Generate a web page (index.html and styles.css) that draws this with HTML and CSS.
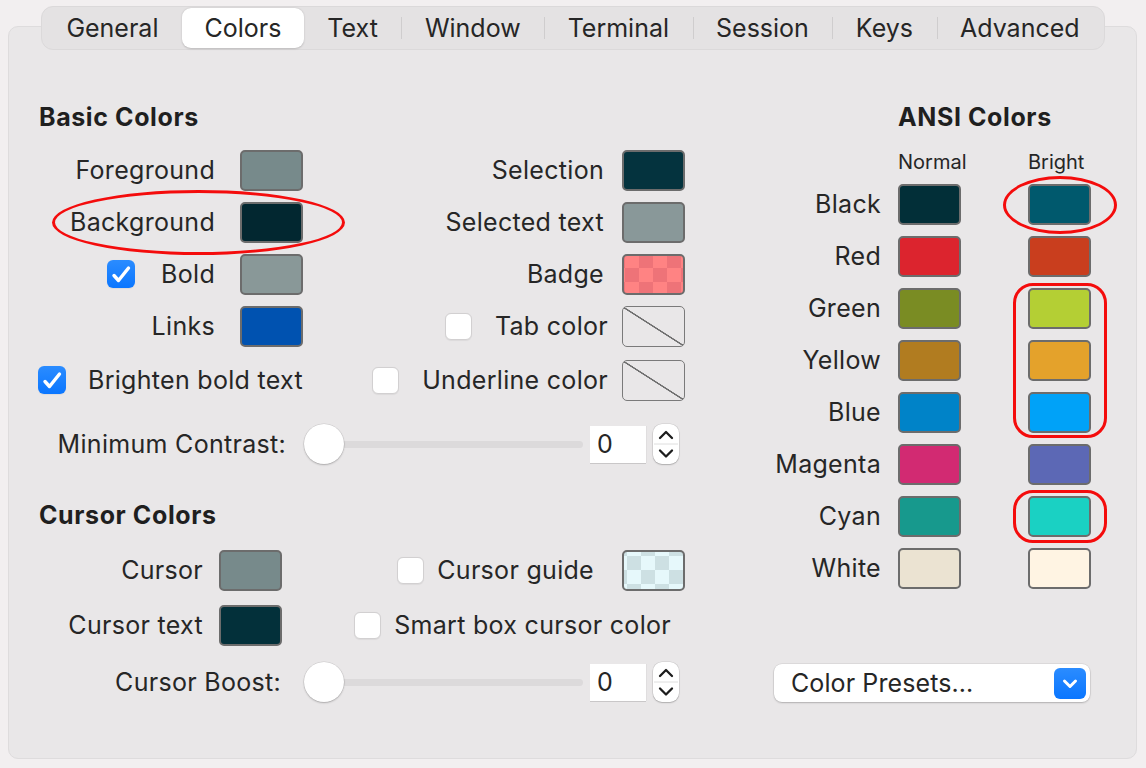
FILE: index.html
```html
<!DOCTYPE html>
<html>
<head>
<meta charset="utf-8">
<title>Profiles — Colors</title>
<link rel="stylesheet" href="styles.css">
</head>
<body>
<div class="window">
  <div class="tabbar-wrap">
    <div class="tabbar">
      <div class="tab">General</div>
      <div class="tab active">Colors</div>
      <div class="tab">Text</div>
      <div class="tab sep">Window</div>
      <div class="tab sep">Terminal</div>
      <div class="tab sep">Session</div>
      <div class="tab sep">Keys</div>
      <div class="tab sep">Advanced</div>
    </div>
  </div>

  <div class="panel">
    <div class="left">
      <h2 class="heading">Basic Colors</h2>
      <div class="basic-grid">
        <div class="cell c1"><span class="label">Foreground</span><span class="swatch sw-fg"></span></div>
        <div class="cell c2"><span class="label">Selection</span><span class="swatch sw-sel"></span></div>

        <div class="cell c1"><span class="label">Background</span><span class="swatch sw-bg"></span></div>
        <div class="cell c2"><span class="label">Selected text</span><span class="swatch sw-seltext"></span></div>

        <div class="cell c1"><span class="checkbox checked bold-cb"><svg viewBox="0 0 28 28" width="28" height="28"><path d="M7 15.5 L11.5 20.5 L21.5 8" fill="none" stroke="#fff" stroke-width="3.4" stroke-linecap="round" stroke-linejoin="round"/></svg></span><span class="label">Bold</span><span class="swatch sw-bold"></span></div>
        <div class="cell c2"><span class="label">Badge</span><span class="swatch sw-badge"></span></div>

        <div class="cell c1"><span class="label">Links</span><span class="swatch sw-links"></span></div>
        <div class="cell c2 cbrow"><span class="checkbox"></span><span class="label">Tab color</span><span class="swatch sw-none"></span></div>

        <div class="cell c1 brighten"><span class="checkbox checked"><svg viewBox="0 0 28 28" width="28" height="28"><path d="M7 15.5 L11.5 20.5 L21.5 8" fill="none" stroke="#fff" stroke-width="3.4" stroke-linecap="round" stroke-linejoin="round"/></svg></span><span class="label">Brighten bold text</span></div>
        <div class="cell c2 cbrow"><span class="checkbox"></span><span class="label">Underline color</span><span class="swatch sw-none"></span></div>
      </div>

      <div class="slider-row contrast">
        <span class="slabel">Minimum Contrast:</span>
        <div class="track"><span class="knob"></span></div>
        <span class="numfield">0</span>
        <span class="stepper"><svg viewBox="0 0 26 40" width="26" height="40"><path d="M7 14 L13 8 L19 14" fill="none" stroke="#1d1d1d" stroke-width="2.3" stroke-linecap="round" stroke-linejoin="round"/><line x1="1" y1="20" x2="25" y2="20" stroke="#dedede" stroke-width="1"/><path d="M7 26.5 L13 32.5 L19 26.5" fill="none" stroke="#1d1d1d" stroke-width="2.3" stroke-linecap="round" stroke-linejoin="round"/></svg></span>
      </div>

      <h2 class="heading cursor-heading">Cursor Colors</h2>
      <div class="cursor-grid">
        <div class="cell k1"><span class="label">Cursor</span><span class="swatch sw-cursor"></span></div>
        <div class="cell k2"><span class="checkbox"></span><span class="label">Cursor guide</span><span class="swatch sw-guide"></span></div>
        <div class="cell k1"><span class="label">Cursor text</span><span class="swatch sw-cursortext"></span></div>
        <div class="cell k2 smart"><span class="checkbox"></span><span class="label">Smart box cursor color</span></div>
      </div>

      <div class="slider-row boost">
        <span class="slabel">Cursor Boost:</span>
        <div class="track"><span class="knob"></span></div>
        <span class="numfield">0</span>
        <span class="stepper"><svg viewBox="0 0 26 40" width="26" height="40"><path d="M7 14 L13 8 L19 14" fill="none" stroke="#1d1d1d" stroke-width="2.3" stroke-linecap="round" stroke-linejoin="round"/><line x1="1" y1="20" x2="25" y2="20" stroke="#dedede" stroke-width="1"/><path d="M7 26.5 L13 32.5 L19 26.5" fill="none" stroke="#1d1d1d" stroke-width="2.3" stroke-linecap="round" stroke-linejoin="round"/></svg></span>
      </div>
    </div>

    <div class="right">
      <h2 class="heading ansi-heading">ANSI Colors</h2>
      <div class="ansi-grid">
        <span></span><span class="colhead">Normal</span><span class="colhead">Bright</span>
        <span class="alabel">Black</span><span class="swatch a-black"></span><span class="swatch b-black"></span>
        <span class="alabel">Red</span><span class="swatch a-red"></span><span class="swatch b-red"></span>
        <span class="alabel">Green</span><span class="swatch a-green"></span><span class="swatch b-green"></span>
        <span class="alabel">Yellow</span><span class="swatch a-yellow"></span><span class="swatch b-yellow"></span>
        <span class="alabel">Blue</span><span class="swatch a-blue"></span><span class="swatch b-blue"></span>
        <span class="alabel">Magenta</span><span class="swatch a-magenta"></span><span class="swatch b-magenta"></span>
        <span class="alabel">Cyan</span><span class="swatch a-cyan"></span><span class="swatch b-cyan"></span>
        <span class="alabel">White</span><span class="swatch a-white"></span><span class="swatch b-white"></span>
      </div>
      <div class="popup">
        <span class="popup-text">Color Presets...</span>
        <span class="popup-btn"><svg viewBox="0 0 32 31" width="32" height="31"><path d="M10.5 13 L16 18.5 L21.5 13" fill="none" stroke="#fff" stroke-width="3" stroke-linecap="round" stroke-linejoin="round"/></svg></span>
      </div>
    </div>
  </div>

  <span class="mark mark-bg"></span>
  <span class="mark mark-black"></span>
  <span class="mark mark-gyb"></span>
  <span class="mark mark-cyan"></span>
</div>
</body>
</html>
```

FILE: styles.css
```css
* { box-sizing: border-box; }
html, body { margin: 0; padding: 0; }
body {
  background: #f2eff0;
  font-family: Inter, "Noto Sans", "Liberation Sans", sans-serif;
  color: #262626;
  width: 1146px;
  height: 768px;
  overflow: hidden;
}
.window {
  position: relative;
  width: 1146px;
  height: 768px;
  padding-top: 6px;
}

/* Tabs */
.tabbar-wrap {
  display: flex;
  justify-content: center;
  position: relative;
  z-index: 2;
}
.tabbar {
  display: flex;
  align-items: center;
  height: 44px;
  padding: 0 1px;
  background: #e4e2e3;
  border: 1px solid #dbd9da;
  border-radius: 12px;
}
.tab {
  height: 40px;
  padding: 0 23.5px;
  display: flex;
  align-items: center;
  font-size: 25px;
  line-height: 30px;
  color: #262626;
}
.tab.active {
  background: #fff;
  border-radius: 9px;
  padding: 0 22.5px;
  box-shadow: 0 0.5px 2px rgba(0,0,0,0.18);
}
.tab.sep {
  background-image: linear-gradient(#cfcdce, #cfcdce);
  background-size: 1px 22px;
  background-position: left center;
  background-repeat: no-repeat;
}

/* Panel */
.panel {
  position: relative;
  margin: -24px 9px 0 8px;
  height: 733px;
  background: #e9e7e8;
  border: 1px solid #dedcdd;
  border-radius: 10px;
  display: flex;
  padding-top: 75px;
}
.left { width: 732px; padding-left: 30px; }
.right { width: 395px; }

.heading {
  margin: 0;
  font-size: 25px;
  font-weight: 700;
  line-height: 30px;
  letter-spacing: 0.6px;
  color: #1f1f1f;
}

.label {
  font-size: 25px;
  line-height: 30px;
  letter-spacing: 0.3px;
  white-space: nowrap;
}

/* Swatches */
.swatch {
  display: block;
  width: 63px;
  height: 41px;
  border: 2px solid #6c6c6c;
  border-radius: 5px;
  flex-shrink: 0;
}
.sw-fg { background: #778a8b; }
.sw-bg { background: #022730; }
.sw-bold { background: #899898; }
.sw-links { background: #0052b0; }
.sw-sel { background: #04333e; }
.sw-seltext { background: #899899; }
.sw-cursor { background: #778a8b; }
.sw-cursortext { background: #03303a; }
.sw-none {
  background: linear-gradient(to top right, transparent calc(50% - 1px), #6f6f6f calc(50% - 0.5px), #6f6f6f calc(50% + 0.5px), transparent calc(50% + 1px));
  border-color: #7a7a7a;
  border-width: 1.5px;
}
.sw-badge {
  background-color: #ff8383;
  background-image: conic-gradient(transparent 25%, #ee7378 0 50%, transparent 0 75%, #ee7378 0);
  background-size: 28px 28px;
  background-position: 1px 12px;
}
.sw-guide {
  background-color: #e6f8fb;
  background-image: conic-gradient(transparent 25%, #cde0e3 0 50%, transparent 0 75%, #cde0e3 0);
  background-size: 28px 28px;
  background-position: 3px 4px;
}

/* Checkboxes */
.checkbox {
  display: block;
  width: 27px;
  height: 27px;
  border-radius: 6px;
  background: #fff;
  border: 1px solid #d2d0d1;
  box-shadow: 0 0.5px 1px rgba(0,0,0,0.06);
  flex-shrink: 0;
}
.checkbox.checked {
  width: 28px;
  height: 28px;
  border: none;
  background: linear-gradient(#2b8cff, #0a76ff);
}
.checkbox svg { display: block; }

/* Basic grid */
.basic-grid {
  margin-top: 12px;
  display: grid;
  grid-template-columns: 264px 382px;
  grid-template-rows: 52px 52px 52px 52px 56px;
}
.cell {
  display: flex;
  align-items: center;
  justify-content: flex-end;
}
.c1 .label { margin-right: 25px; }
.c2 .label { margin-right: 18px; }
.c2.cbrow .label { margin-right: 14px; }
.c2.cbrow .checkbox { margin-right: 23px; }
.bold-cb { margin-right: 26px; }
.brighten .checkbox { margin-right: 22px; }
.brighten .label { margin-right: 0; }

/* Sliders */
.slider-row {
  display: flex;
  align-items: center;
  height: 44px;
}
.contrast { margin-top: 14px; }
.boost { margin-top: 9px; }
.slabel {
  width: 247px;
  text-align: right;
  font-size: 25px;
  line-height: 30px;
  letter-spacing: 0.3px;
  margin-right: 18px;
  white-space: nowrap;
}
.boost .slabel { padding-right: 5px; }
.track {
  width: 279px;
  height: 7px;
  border-radius: 4px;
  background: #dcdadb;
  display: flex;
  align-items: center;
}
.knob {
  display: block;
  width: 40px;
  height: 40px;
  border-radius: 50%;
  background: #fff;
  flex-shrink: 0;
  box-shadow: 0 0 0 0.5px rgba(0,0,0,0.12), 0 1px 2px rgba(0,0,0,0.22);
}
.numfield {
  margin-left: 7px;
  width: 56px;
  height: 37px;
  background: #fff;
  font-size: 25px;
  line-height: 37px;
  padding-left: 7px;
  box-shadow: 0 1px 0 #c9c7c8, 1px 0 0 #e0dedf;
}
.stepper {
  margin-left: 7px;
  width: 26px;
  height: 40px;
  background: #fff;
  border-radius: 9px;
  box-shadow: 0 0 0 0.5px rgba(0,0,0,0.12), 0 1px 1.5px rgba(0,0,0,0.2);
}
.stepper svg { display: block; }

/* Cursor section */
.cursor-heading { margin-top: 34px; }
.cursor-grid {
  margin-top: 14px;
  display: grid;
  grid-template-columns: 243px 403px;
  grid-template-rows: 52px 52px;
  row-gap: 3px;
}
.k1 .label { margin-right: 16px; }
.k2 .checkbox { margin-right: 13px; }
.k2 .label { margin-right: 28px; }
.k2.smart .label { margin-right: 14px; }

/* ANSI */
.ansi-heading { padding-left: 157px; }
.ansi-grid {
  margin-top: 18px;
  display: grid;
  grid-template-columns: 157px 130px 64px;
  grid-template-rows: 28px repeat(8, 52px);
  align-items: center;
}
.colhead {
  font-size: 20px;
  line-height: 24px;
  color: #262626;
  align-self: start;
}
.alabel {
  font-size: 25px;
  line-height: 30px;
  letter-spacing: 0.3px;
  text-align: right;
  padding-right: 17px;
  white-space: nowrap;
}
.a-black { background: #022f38; }
.a-red { background: #dc242e; }
.a-green { background: #7a8c23; }
.a-yellow { background: #b17c20; }
.a-blue { background: #0083c8; }
.a-magenta { background: #d22a72; }
.a-cyan { background: #17998d; }
.a-white { background: #ebe3d2; }
.b-black { background: #00596d; }
.b-red { background: #c93e1e; }
.b-green { background: #b4cf34; }
.b-yellow { background: #e4a22b; }
.b-blue { background: #00a2f8; }
.b-magenta { background: #5c68b5; }
.b-cyan { background: #1ad1c3; }
.b-white { background: #fff4e3; }

.popup {
  margin: 70px 0 0 33px;
  width: 316px;
  height: 38px;
  background: #fff;
  border-radius: 8px;
  box-shadow: 0 0 0 0.5px rgba(0,0,0,0.1), 0 1px 2px rgba(0,0,0,0.2);
  display: flex;
  align-items: center;
  justify-content: space-between;
  padding: 0 4px 0 17px;
}
.popup-text { font-size: 25px; line-height: 30px; letter-spacing: 0.1px; }
.popup-btn {
  width: 32px;
  height: 31px;
  border-radius: 6px;
  background: linear-gradient(#2b8cff, #0a76ff);
}
.popup-btn svg { display: block; }

/* Red annotation marks (overlay) */
.mark {
  position: absolute;
  border: 3px solid #f40c0c;
  pointer-events: none;
}
.mark-bg { left: 52px; top: 190px; width: 293px; height: 65px; border-radius: 50%; }
.mark-black { left: 1003px; top: 176px; width: 114px; height: 58px; border-radius: 50%; }
.mark-gyb { left: 1013px; top: 283px; width: 94px; height: 155px; border-radius: 20px; }
.mark-cyan { left: 1013px; top: 490px; width: 94px; height: 53px; border-radius: 20px; }
```
